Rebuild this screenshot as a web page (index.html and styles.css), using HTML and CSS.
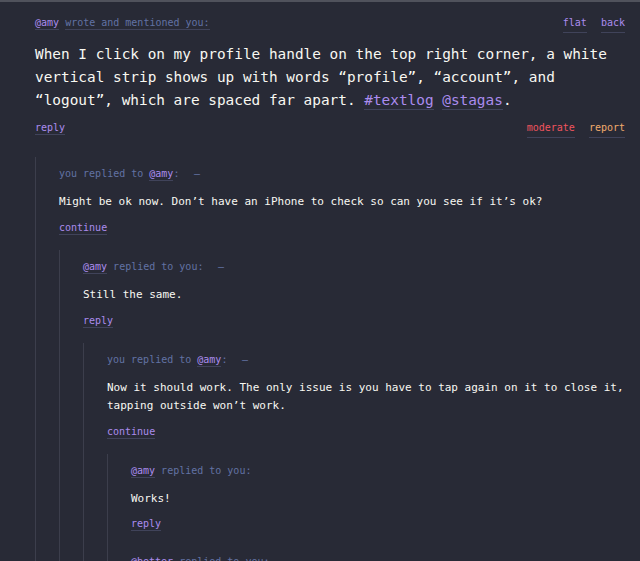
FILE: index.html
```html
<!DOCTYPE html>
<html>
<head>
<meta charset="utf-8">
<link rel="stylesheet" href="styles.css">
</head>
<body>
<div class="page">
  <div class="row meta">
    <span><a class="link user">@amy</a> <a class="link muted">wrote and mentioned you:</a></span>
    <span class="links"><a class="link user">flat</a><a class="link user">back</a></span>
  </div>
  <p class="main-text">When I click on my profile handle on the top right corner, a white vertical strip shows up with words “profile”, “account”, and “logout”, which are spaced far apart. <a class="link user">#textlog</a> <a class="link user">@stagas</a>.</p>
  <div class="row actions">
    <span><a class="link user">reply</a></span>
    <span class="links"><a class="link red">moderate</a><a class="link orange">report</a></span>
  </div>

  <div class="thread top">
    <div class="comment">
      <div class="meta">you replied to <a class="link user">@amy</a>:<span class="dash">–</span></div>
      <p class="body">Might be ok now. Don’t have an iPhone to check so can you see if it’s ok?</p>
      <div class="actions"><a class="link user">continue</a></div>
      <div class="thread">
        <div class="comment">
          <div class="meta"><a class="link user">@amy</a> replied to you:<span class="dash">–</span></div>
          <p class="body">Still the same.</p>
          <div class="actions"><a class="link user">reply</a></div>
          <div class="thread">
            <div class="comment">
              <div class="meta">you replied to <a class="link user">@amy</a>:<span class="dash">–</span></div>
              <p class="body">Now it should work. The only issue is you have to tap again on it to close it, tapping outside won’t work.</p>
              <div class="actions"><a class="link user">continue</a></div>
              <div class="thread">
                <div class="comment">
                  <div class="meta"><a class="link user">@amy</a> replied to you:</div>
                  <p class="body">Works!</p>
                  <div class="actions"><a class="link user">reply</a></div>
                </div>
                <div class="comment">
                  <div class="meta"><a class="link user">@better</a> replied to you:</div>
                </div>
              </div>
            </div>
          </div>
        </div>
      </div>
    </div>
  </div>
</div>
</body>
</html>
```

FILE: styles.css
```css
html, body {
  margin: 0;
  padding: 0;
  background: #282a36;
  height: 100%;
  overflow: hidden;
}
body {
  border-top: 2px solid #50525c;
  font-family: "DejaVu Sans Mono", monospace;
  color: #f8f8f2;
}
.page {
  padding: 13px 15px 0 35px;
}
.row {
  display: flex;
  justify-content: space-between;
  align-items: baseline;
}
.links {
  display: flex;
  gap: 14px;
}
.meta {
  font-size: 10px;
  line-height: 16px;
  color: #6272a4;
}
.actions {
  font-size: 10px;
  line-height: 16px;
  margin-top: 8.5px;
}
.main-text {
  margin: 9.5px 0 0;
  font-size: 14.4px;
  line-height: 23px;
}
.link {
  text-decoration: none;
  border-bottom: 1px solid #40435a;
  padding-bottom: 1px;
}
.user { color: #ab8cee; }
.muted { color: #6272a4; }
.red { color: #f0545e; }
.orange { color: #f0aa6c; }
.dash {
  margin-left: 14.5px;
}
.thread {
  border-left: 1px solid #3c3e4c;
  padding-left: 23px;
  margin-top: 14px;
}
.thread.top {
  margin-top: 19px;
}
.comment {
  padding-top: 9px;
}
.comment + .comment {
  padding-top: 22px;
}
.body {
  margin: 11px 0 0;
  font-size: 11px;
  line-height: 18.3px;
}
.comment .actions {
  margin-top: 8.5px;
}
```
